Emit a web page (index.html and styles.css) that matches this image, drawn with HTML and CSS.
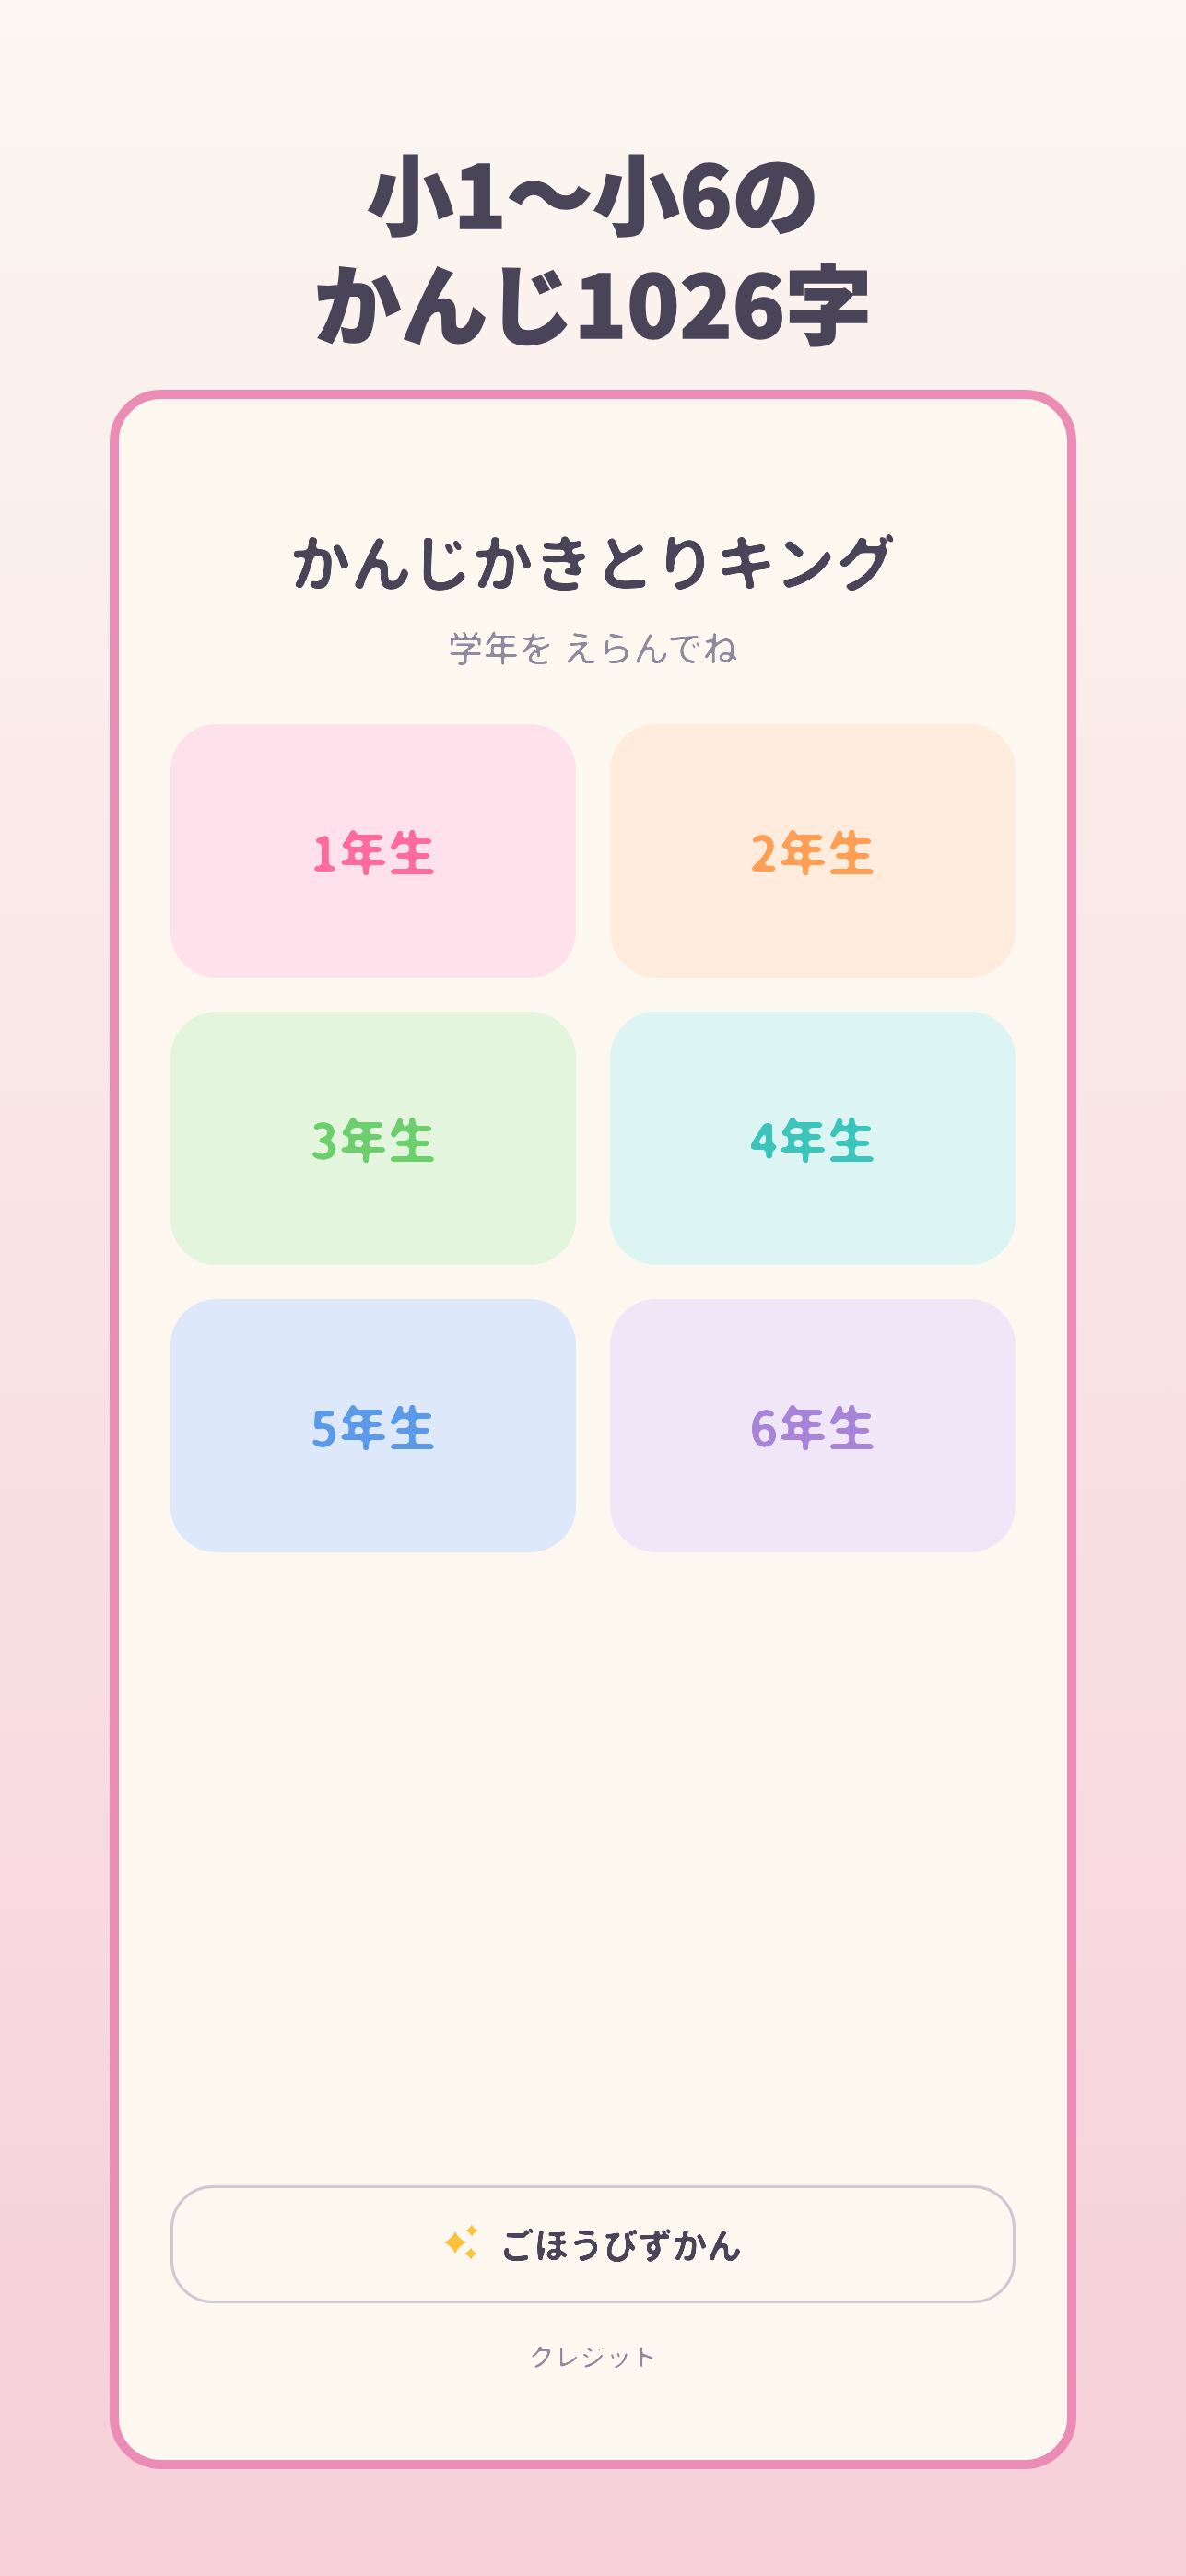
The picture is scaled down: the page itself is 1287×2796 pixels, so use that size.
FILE: index.html
```html
<!DOCTYPE html>
<html lang="ja">
<head>
<meta charset="utf-8">
<title>かんじかきとりキング</title>
<link rel="stylesheet" href="styles.css">
</head>
<body>
<svg class="defs" width="0" height="0" aria-hidden="true">
  <filter id="round-lg" x="-5%" y="-10%" width="110%" height="120%" color-interpolation-filters="sRGB">
    <feGaussianBlur stdDeviation="2"/>
    <feColorMatrix values="1 0 0 0 0  0 1 0 0 0  0 0 1 0 0  0 0 0 9 -4.2"/>
  </filter>
  <filter id="round-sm" x="-5%" y="-10%" width="110%" height="120%" color-interpolation-filters="sRGB">
    <feGaussianBlur stdDeviation="1"/>
    <feColorMatrix values="1 0 0 0 0  0 1 0 0 0  0 0 1 0 0  0 0 0 6 -2.5"/>
  </filter>
</svg>
<main class="page">
  <h1 class="headline">小1〜小6の<br>かんじ1026字</h1>
  <section class="card">
    <header class="card-head">
      <h2 class="app-title">かんじかきとりキング</h2>
      <p class="app-sub">学年を えらんでね</p>
    </header>
    <div class="grades">
      <button class="grade g1"><span>1年生</span></button>
      <button class="grade g2"><span>2年生</span></button>
      <button class="grade g3"><span>3年生</span></button>
      <button class="grade g4"><span>4年生</span></button>
      <button class="grade g5"><span>5年生</span></button>
      <button class="grade g6"><span>6年生</span></button>
    </div>
    <footer class="card-foot">
      <button class="zukan">
        <svg class="sparkle" viewBox="0 0 40 40" aria-hidden="true">
          <path d="M12 8 Q15.800 16.200 24 20 Q15.800 23.800 12 32 Q8.200 23.800 0 20 Q8.200 16.200 12 8Z"/>
          <path d="M30 0.500 Q32 5 36.500 7 Q32 9 30 13.500 Q28 9 23.500 7 Q28 5 30 0.500Z"/>
          <path d="M29 25.500 Q31 30 35.500 32 Q31 34 29 38.500 Q27 34 22.500 32 Q27 30 29 25.500Z"/>
        </svg>
        <span class="zukan-label">ごほうびずかん</span>
      </button>
      <a class="credit" href="#">クレジット</a>
    </footer>
  </section>
</main>
</body>
</html>
```
FILE: styles.css
```css
* { box-sizing: border-box; }
html, body { margin: 0; padding: 0; }
body {
  width: 1287px;
  height: 2796px;
  background: linear-gradient(180deg, #fcf7f0 0%, #f6cfd9 100%);
  font-family: "Noto Sans CJK JP", "Noto Sans", sans-serif;
  color: #4a4458;
  overflow: hidden;
}
.defs { position: absolute; }
.page {
  display: flex;
  flex-direction: column;
  align-items: center;
  padding-top: 148px;
}
.headline {
  margin: 0 0 37px;
  font-size: 94px;
  line-height: 119px;
  font-weight: 900;
  text-align: center;
  color: #4a4458;
  -webkit-text-stroke: 1.5px #4a4458;
}
.card {
  width: 1049px;
  height: 2257px;
  background: #fcf8f0;
  border: 10px solid #ea8cb3;
  border-radius: 56px;
  padding: 127px 56px 91px;
  display: flex;
  flex-direction: column;
}
.card-head { text-align: center; }
.app-title {
  margin: 0;
  font-size: 66px;
  line-height: 94px;
  font-weight: 700;
  color: #4a4458;
  filter: url(#round-lg);
}
.app-sub {
  margin: 19px 0 0;
  font-size: 38.600px;
  line-height: 56px;
  font-weight: 400;
  color: #8f8a9e;
  filter: url(#round-sm);
}
.grades {
  display: grid;
  grid-template-columns: 440px 440px;
  grid-auto-rows: 275px;
  gap: 37px;
  margin-top: 57px;
}
.grade {
  border: 0;
  border-radius: 50px;
  font: inherit;
  font-size: 53px;
  font-weight: 700;
  line-height: 1;
  display: flex;
  align-items: center;
  justify-content: center;
}
.grade span { filter: url(#round-lg); }
.g1 { background: #ffe1ec; color: #ff6b9d; }
.g2 { background: #ffecdc; color: #ff9f55; }
.g3 { background: #e3f5dd; color: #6dce6d; }
.g4 { background: #ddf5f2; color: #3cc5bb; }
.g5 { background: #dde9fb; color: #5b9ae8; }
.g6 { background: #efe7f8; color: #a884d8; }
.card-foot {
  margin-top: auto;
  display: flex;
  flex-direction: column;
  align-items: center;
}
.zukan {
  width: 917px;
  height: 128px;
  border: 3px solid #cdc9d3;
  border-radius: 46px;
  background: transparent;
  padding: 0 0 4px;
  font: inherit;
  font-size: 37.500px;
  font-weight: 700;
  color: #4a4458;
  display: flex;
  align-items: center;
  justify-content: center;
  gap: 20px;
}
.zukan-label { filter: url(#round-sm); }
.sparkle { width: 40px; height: 40px; fill: #fcc13c; }
.credit {
  margin-top: 35px;
  font-size: 28px;
  line-height: 44px;
  color: #8f8a9e;
  text-decoration: none;
  filter: url(#round-sm);
}
```
